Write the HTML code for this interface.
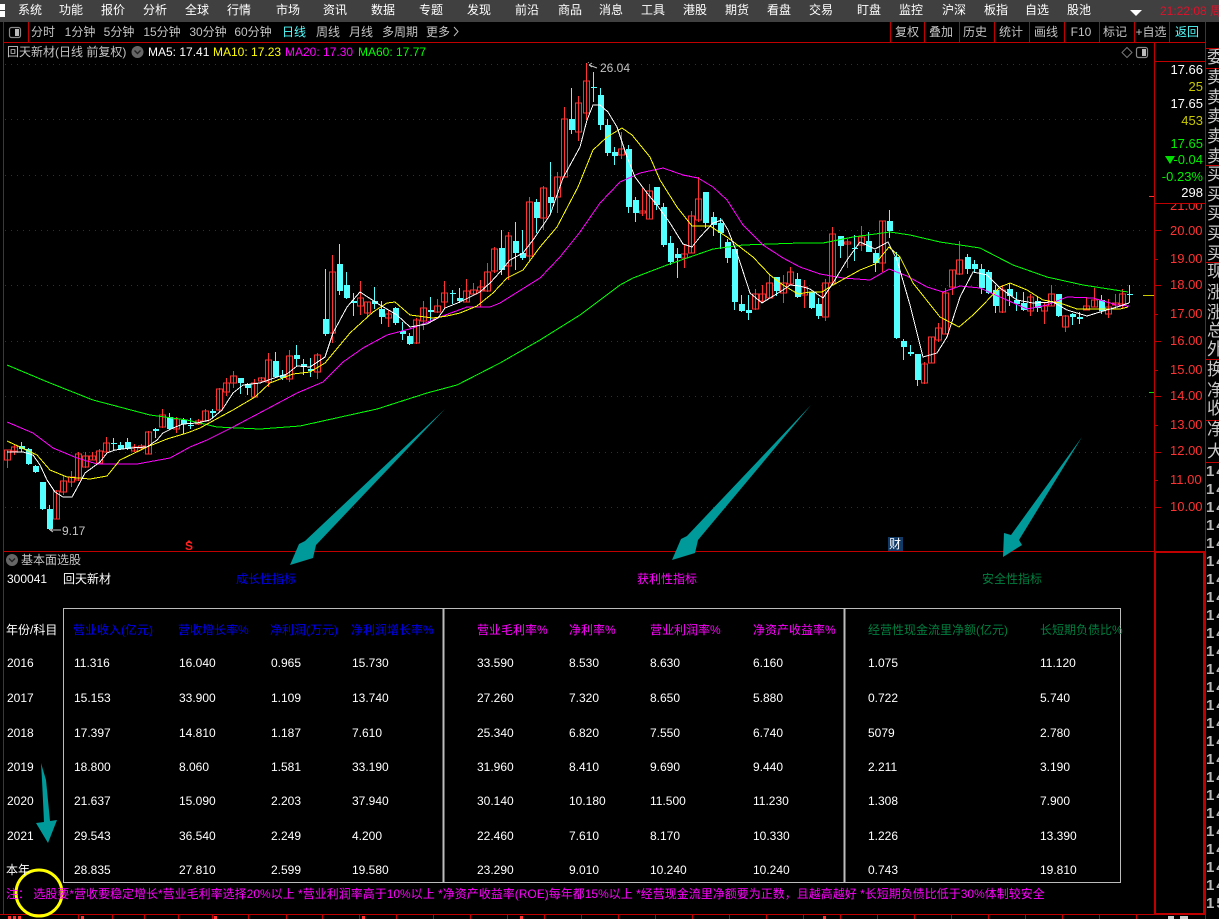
<!DOCTYPE html>
<html lang="zh">
<head>
<meta charset="utf-8">
<title>回天新材</title>
<style>
html,body{margin:0;padding:0;background:#000}
#r{position:relative;width:1219px;height:919px;overflow:hidden;background:#000;font:12px/16px "Liberation Sans","WenQuanYi Zen Hei","Noto Sans CJK SC",sans-serif;color:#ccc}
#r svg{position:absolute;left:0;top:0}
.t{position:absolute;white-space:nowrap;height:16px;line-height:16px}
.c{transform:translateX(-50%)}
.e{transform:translateX(-100%)}
.bar{position:absolute;left:0;top:0;width:1219px;height:22px;background:#404040}
.w{color:#fff}.g{color:#c4c4c4}.b{color:#0000ee}.m{color:#f0f}.s{color:#007f40}.ax{color:#ff3232;font-size:13px}
.rc{font-size:17px;color:#c8c8c8;left:1207px}
.n{font:bold 15px/16px "Liberation Sans",sans-serif;color:#bbb;left:1206px;letter-spacing:2px}
</style>
</head>
<body>
<div id="r">
<div class="bar"></div>

<svg width="1219" height="919" viewBox="0 0 1219 919">
<!-- hamburger -->
<path d="M0 4h5v6H0zM0 11h5v6H0z" fill="#fff"/>
<path d="M1130 10h12l-6 6z" fill="#fff"/>
<!-- frame lines -->
<g fill="#c00000" shape-rendering="crispEdges">
<rect x="3" y="22" width="1" height="892"/>
<rect x="3" y="42" width="1202" height="1"/>
<rect x="3" y="551" width="1151" height="1"/>
<rect x="0" y="914" width="1154" height="1"/>
<rect x="1154" y="42" width="1" height="510"/>
<rect x="1205" y="22" width="1" height="897"/>
<rect x="1154" y="61" width="51" height="1"/>
<rect x="1154" y="203" width="51" height="1"/>
<rect x="28" y="22" width="1" height="20"/>
<rect x="890" y="22" width="1" height="20"/><rect x="924" y="22" width="1" height="20"/><rect x="959" y="22" width="1" height="20"/><rect x="994" y="22" width="1" height="20"/><rect x="1029" y="22" width="1" height="20"/><rect x="1064" y="22" width="1" height="20"/><rect x="1099" y="22" width="1" height="20"/><rect x="1134" y="22" width="1" height="20"/><rect x="1169" y="22" width="1" height="20"/>
<rect x="1205" y="48" width="14" height="1"/><rect x="1205" y="68" width="14" height="1"/><rect x="1205" y="165" width="14" height="1"/><rect x="1205" y="262" width="14" height="1"/><rect x="1205" y="359" width="14" height="1"/><rect x="1205" y="420" width="14" height="1"/><rect x="1205" y="462" width="14" height="1"/>
<!-- lower right box -->
<rect x="1154" y="551" width="51" height="2"/>
<rect x="1154" y="913" width="51" height="2"/>
<rect x="1154" y="551" width="2" height="364"/>
<rect x="1203" y="551" width="3" height="364"/>
<!-- bottom ticks -->
<path d="M78 914h1v5h-1zM112 914h1v5h-1zM144 914h1v5h-1zM178 914h1v5h-1zM212 914h1v5h-1zM248 914h1v5h-1zM286 914h1v5h-1zM322 914h1v5h-1zM359 914h1v5h-1zM396 914h1v5h-1zM433 914h1v5h-1zM470 914h1v5h-1zM507 914h1v5h-1zM544 914h1v5h-1zM581 914h1v5h-1zM618 914h1v5h-1zM655 914h1v5h-1zM692 914h1v5h-1zM729 914h1v5h-1zM766 914h1v5h-1zM803 914h1v5h-1zM840 914h1v5h-1zM877 914h1v5h-1zM914 914h1v5h-1zM951 914h1v5h-1zM988 914h1v5h-1zM1025 914h1v5h-1zM1062 914h1v5h-1zM1099 914h1v5h-1zM1136 914h1v5h-1z"/>
</g>
<path d="M8 916h3v3H8zM13 916h3v3h-3zM18 916h3v3h-3zM81 916h3v3h-3zM214 916h3v3h-3zM362 916h3v3h-3zM520 916h3v3h-3zM823 916h3v3h-3z" fill="#ff3232"/>
<path d="M1168 916h6v3h-6zM1180 916h8v3h-8z" fill="#ccc"/>

<!-- grid -->
<g stroke="#a00000" stroke-width="1" stroke-dasharray="1 5" shape-rendering="crispEdges">
<path d="M5 64.5H1150M5 119.5H1150M5 175.5H1150M5 230.5H1150M5 285.5H1150M5 341.5H1150M5 396.5H1150M5 452.5H1150M5 507.5H1150"/>
</g>
<!-- axis ticks -->
<path d="M1155 230.5h6M1155 259.5h3M1155 285.5h6M1155 314.5h3M1155 341.5h6M1155 370.5h3M1155 396.5h6M1155 425.5h3M1155 452.5h6M1155 480.5h3M1155 507.5h6" stroke="#c00000" fill="none" shape-rendering="crispEdges"/>
<path d="M1149 196h5v1h-5z" fill="#ff3232"/>
<path d="M1143 295h11v1h-11z" fill="#c8c800"/>
<path d="M1149 392h5v1h-5z" fill="#00e000"/>

<!-- cyan wicks -->
<path fill="none" stroke="#54ffff" shape-rendering="crispEdges" d="M21.5 442V452M28.5 448V465M35.5 465V473M42.5 482V510M49.5 505V530M113.5 438V451M120.5 442V450M127.5 438V450M155.5 428V438M169.5 413V430M183.5 418V434M190.5 418V429M212.5 409V418M240.5 378V394M247.5 383V395M275.5 352V378M282.5 370V380M296.5 345V367M303.5 359V375M310.5 358V377M325.5 269V336M339.5 244V295M346.5 272V299M353.5 293V316M374.5 287V309M381.5 301V324M395.5 307V325M402.5 322V340M409.5 333V345M430.5 297V322M452.5 290V304M459.5 288V303M501.5 230V275M515.5 222V270M522.5 230V260M536.5 199V233M550.5 162V213M571.5 88V134M593.5 72V102M600.5 88V130M607.5 119V156M614.5 147V165M628.5 145V213M635.5 197V222M656.5 187V210M663.5 203V247M670.5 236V265M677.5 248V278M705.5 192V228M713.5 212V236M720.5 218V249M727.5 239V263M734.5 249V310M741.5 295V312M748.5 295V320M776.5 277V296M797.5 273V298M811.5 292V309M818.5 298V319M840.5 236V258M854.5 235V261M868.5 232V252M875.5 250V272M889.5 210V238M896.5 252V339M903.5 339V360M910.5 345V356M917.5 354V386M967.5 254V274M974.5 260V273M981.5 264V294M988.5 270V294M995.5 285V313M1009.5 283V306M1016.5 292V311M1023.5 292V311M1037.5 297V312M1058.5 294V317M1072.5 313V325M1079.5 312V324M1101.5 295V314M1129.5 285V303"/>
<!-- cyan bodies -->
<path fill="#54ffff" shape-rendering="crispEdges" d="M19 446h6v3h-6zM26 449h6v15h-6zM33 466h6v6h-6zM40 482h6v27h-6zM47 509h6v20h-6zM111 443h6v1h-6zM118 445h6v4h-6zM125 442h6v7h-6zM153 429h6v2h-6zM167 417h6v12h-6zM181 420h6v4h-6zM188 425h6v1h-6zM210 411h6v2h-6zM238 378h6v5h-6zM245 384h6v4h-6zM273 361h6v16h-6zM280 375h6v3h-6zM294 355h6v4h-6zM301 364h6v2h-6zM308 369h6v2h-6zM323 319h6v15h-6zM337 264h6v27h-6zM344 285h6v13h-6zM351 301h6v2h-6zM372 301h6v3h-6zM379 309h6v8h-6zM393 308h6v15h-6zM400 331h6v3h-6zM407 336h6v8h-6zM428 310h6v2h-6zM450 293h6v1h-6zM457 298h6v3h-6zM499 248h6v22h-6zM513 241h6v12h-6zM520 253h6v5h-6zM534 202h6v16h-6zM548 197h6v6h-6zM569 119h6v11h-6zM591 87h6v1h-6zM598 95h6v30h-6zM605 125h6v28h-6zM612 152h6v4h-6zM626 149h6v58h-6zM633 200h6v13h-6zM654 187h6v18h-6zM661 207h6v38h-6zM668 243h6v19h-6zM675 254h6v4h-6zM703 192h6v31h-6zM711 217h6v8h-6zM718 223h6v10h-6zM725 242h6v16h-6zM732 249h6v53h-6zM739 304h6v7h-6zM746 310h6v3h-6zM774 277h6v14h-6zM795 279h6v18h-6zM809 292h6v16h-6zM816 304h6v12h-6zM838 236h6v10h-6zM852 248h6v1h-6zM866 241h6v11h-6zM873 253h6v10h-6zM887 221h6v10h-6zM894 257h6v81h-6zM901 341h6v6h-6zM908 352h6v2h-6zM915 354h6v26h-6zM965 257h6v12h-6zM972 264h6v5h-6zM979 269h6v19h-6zM986 272h6v21h-6zM993 290h6v16h-6zM1007 289h6v7h-6zM1014 300h6v4h-6zM1021 303h6v7h-6zM1035 301h6v7h-6zM1056 294h6v22h-6zM1070 314h6v3h-6zM1077 317h6v2h-6zM1099 300h6v11h-6zM1127 294h6v1h-6z"/>
<!-- red candles -->
<path fill="#000" stroke="#ff3232" shape-rendering="crispEdges" d="M7.5 450V468M4.5 450h6v10h-6zM14.5 445V455M11.5 447h6v4h-6zM56.5 490V519M53.5 491h6v28h-6zM63.5 476V495M60.5 481h6v11h-6zM71.5 471V487M68.5 477h6v5h-6zM78.5 452V481M75.5 454h6v26h-6zM85.5 452V468M82.5 456h6v11h-6zM92.5 452V460M89.5 456h6v4h-6zM99.5 449V463M96.5 451h6v12h-6zM106.5 437V452M103.5 443h6v9h-6zM134.5 444V452M131.5 447h6v4h-6zM141.5 444V449M138.5 446h6v2h-6zM148.5 431V454M145.5 432h6v22h-6zM162.5 409V428M159.5 415h6v12h-6zM176.5 417V433M173.5 419h6v10h-6zM198.5 419V425M195.5 421h6v3h-6zM205.5 409V422M202.5 411h6v10h-6zM219.5 388V412M216.5 389h6v21h-6zM226.5 378V396M223.5 383h6v9h-6zM233.5 371V388M230.5 376h6v7h-6zM254.5 379V397M251.5 383h6v14h-6zM261.5 377V383M258.5 378h6v3h-6zM268.5 353V387M265.5 360h6v22h-6zM289.5 350V382M286.5 356h6v23h-6zM317.5 353V379M314.5 355h6v17h-6zM332.5 255V343M329.5 272h6v61h-6zM360.5 281V315M357.5 298h6v8h-6zM367.5 302V317M364.5 302h6v11h-6zM388.5 310V327M385.5 314h6v4h-6zM416.5 318V344M413.5 320h6v23h-6zM423.5 301V330M420.5 308h6v13h-6zM437.5 299V313M434.5 306h6v6h-6zM444.5 281V308M441.5 293h6v9h-6zM466.5 279V302M463.5 291h6v11h-6zM473.5 283V295M470.5 290h6v4h-6zM480.5 280V307M477.5 287h6v4h-6zM487.5 263V292M484.5 272h6v19h-6zM494.5 247V273M491.5 249h6v22h-6zM508.5 232V280M505.5 236h6v30h-6zM529.5 197V262M526.5 202h6v54h-6zM543.5 186V230M540.5 188h6v30h-6zM557.5 172V213M554.5 177h6v20h-6zM564.5 107V177M561.5 119h6v58h-6zM578.5 96V141M575.5 103h6v29h-6zM586.5 63V120M583.5 81h6v32h-6zM621.5 132V159M618.5 149h6v6h-6zM642.5 188V216M639.5 211h6v2h-6zM649.5 184V219M646.5 191h6v28h-6zM684.5 245V268M681.5 254h6v4h-6zM691.5 211V253M688.5 216h6v37h-6zM698.5 177V222M695.5 199h6v21h-6zM755.5 289V310M752.5 294h6v15h-6zM762.5 285V302M759.5 294h6v7h-6zM769.5 275V298M766.5 283h6v15h-6zM783.5 275V303M780.5 283h6v10h-6zM790.5 267V284M787.5 272h6v12h-6zM804.5 280V308M801.5 287h6v8h-6zM825.5 279V321M822.5 283h6v34h-6zM832.5 227V284M829.5 234h6v49h-6zM847.5 239V268M844.5 242h6v2h-6zM861.5 226V251M858.5 237h6v8h-6zM882.5 221V272M879.5 221h6v42h-6zM924.5 362V384M921.5 364h6v19h-6zM931.5 337V363M928.5 337h6v26h-6zM938.5 323V342M935.5 328h6v12h-6zM945.5 288V334M942.5 293h6v41h-6zM952.5 270V295M949.5 270h6v17h-6zM959.5 241V275M956.5 260h6v14h-6zM1002.5 285V313M999.5 290h6v22h-6zM1030.5 294V316M1027.5 297h6v14h-6zM1044.5 303V324M1041.5 306h6v5h-6zM1051.5 285V306M1048.5 294h6v12h-6zM1065.5 315V332M1062.5 316h6v11h-6zM1086.5 297V310M1083.5 306h6v4h-6zM1094.5 288V307M1091.5 300h6v7h-6zM1108.5 299V318M1105.5 307h6v7h-6zM1115.5 294V309M1112.5 303h6v2h-6zM1122.5 289V309M1119.5 294h6v10h-6z"/>

<!-- moving averages -->
<g fill="none" stroke-width="1" stroke-linejoin="round" shape-rendering="crispEdges">
<polyline stroke="#00ff00" points="7,365 50,383 93,400 150,415 187,420 217,427 260,429 300,426 377,409 427,393 457,385 500,363 540,340 580,315 620,285 633,278 667,265 713,249 743,245 800,243 823,243 853,237 890,232 910,235 940,242 980,248 1013,265 1047,277 1083,285 1128,292"/>
<polyline stroke="#ff00ff" points="7,422 33,433 53,448 77,458 97,464 137,464 170,458 190,447 207,440 233,427 267,409 297,393 323,382 343,362 363,348 387,335 413,328 440,317 467,307 490,307 500,303 540,278 560,257 580,232 600,203 620,182 640,173 663,168 683,175 698,178 713,187 727,200 743,225 763,245 783,258 800,267 820,274 843,278 870,280 889,269 907,276 927,287 943,292 960,286 980,288 1000,297 1027,309 1047,305 1067,297 1093,298 1117,305 1129,306"/>
<polyline stroke="#ffff00" points="7,441 20,447 37,455 50,470 67,477 90,479 107,476 120,460 147,447 167,439 187,433 200,428 220,417 233,410 255,397 270,383 293,374 310,372 325,363 350,333 373,312 387,303 395,302 410,315 433,318 447,316 460,313 477,306 493,293 507,278 523,270 540,247 557,227 578,187 593,150 607,137 622,128 632,135 650,157 660,180 677,207 692,226 710,226 727,237 740,247 753,257 770,275 783,285 798,294 810,292 822,292 833,285 860,270 875,264 889,247 900,257 913,283 940,317 959,327 973,315 983,305 1000,287 1010,283 1027,290 1043,300 1060,303 1077,309 1120,309 1128,307"/>
<polyline stroke="#ffffff" points="7,452 13,452 23,452 33,455 40,465 47,480 55,492 63,497 72,497 77,488 85,473 100,462 107,453 115,450 130,448 147,447 157,440 163,433 173,428 183,424 197,423 210,420 222,410 233,393 243,385 260,383 277,377 287,374 297,366 310,367 325,357 333,333 347,307 360,292 380,305 397,315 410,327 427,324 438,318 445,308 460,302 480,292 490,283 500,272 510,260 523,253 533,240 550,215 563,178 580,147 587,120 593,105 600,105 608,112 617,127 627,157 635,177 647,193 657,205 670,223 683,244 692,247 700,237 713,223 722,220 728,230 737,253 750,293 762,303 770,298 783,290 790,285 800,286 810,289 823,298 833,283 847,260 860,242 875,249 888,242 897,260 910,305 923,357 937,353 947,337 960,297 973,272 987,275 1000,288 1017,300 1033,303 1053,302 1067,310 1087,316 1100,312 1117,307 1129,303"/>
</g>

<!-- high/low arrows -->
<path d="M597 68L589 65M589 65l3-2M589 65l3 2" stroke="#c4c4c4" fill="none"/>
<path d="M61 530H50M50 530l3-2M50 530l3 2" stroke="#c4c4c4" fill="none"/>
<path d="M586 64l3-2v1h-2z" fill="#c4c4c4"/>

<!-- teal arrows -->
<g fill="#009a9a">
<polygon points="445,409 316,545 313,558 290,565 299,544 305,541"/>
<polygon points="811,405 698,540 695,553 672,560 681,539 687,536"/>
<polygon points="1082,437 1019,540 1022,545 1003,557 1004,533 1011,535"/>
<polygon points="41,763 42,780 44,822 36,823 48,843 57,820 50,821 46,780"/>
</g>

<!-- toolbar icon -->
<rect x="9.5" y="27.5" width="11" height="10" rx="2" fill="none" stroke="#888" stroke-width="1.2"/>
<rect x="15" y="29" width="4" height="7" fill="#bbb"/>
<rect x="1136.5" y="47.5" width="11" height="10" rx="2" fill="none" stroke="#888" stroke-width="1.2"/>
<rect x="1142" y="49" width="4" height="7" fill="#bbb"/>
<path d="M1127 47.5l5 5-5 5-5-5z" fill="none" stroke="#777"/>
<path d="M454 27l4 4.5-4 4.5" fill="none" stroke="#bbb"/>
<!-- drop circles -->
<circle cx="137.500" cy="52" r="6" fill="#666"/>
<path d="M134.500 50.500l3 3 3-3" fill="none" stroke="#222" stroke-width="1.400"/>
<circle cx="12" cy="560" r="6" fill="#666"/>
<path d="M9 558.500l3 3 3-3" fill="none" stroke="#222" stroke-width="1.400"/>
<!-- red triangle marker -->
<path d="M186 543l3-3 3 3z" fill="#ff2020"/>
<!-- 财 box -->
<rect x="888" y="537" width="15" height="14" fill="#123a66"/>
<!-- down triangle -->
<path d="M1165 156h10l-5 8z" fill="#00e000"/>

<!-- table box -->
<g fill="none" stroke="#bcbcbc" shape-rendering="crispEdges">
<rect x="63.500" y="608.500" width="1057" height="274"/>
</g>
<path d="M442.500 608h2v275h-2zM843.500 608h2v275h-2z" fill="#bcbcbc"/>

<!-- yellow circle -->
<circle cx="39" cy="893" r="23" fill="none" stroke="#ffff00" stroke-width="3"/>
</svg>

<!-- menu -->
<span class="t c w" style="left:30px;top:2px">系统</span><span class="t c w" style="left:71px;top:2px">功能</span><span class="t c w" style="left:113px;top:2px">报价</span><span class="t c w" style="left:155px;top:2px">分析</span><span class="t c w" style="left:197px;top:2px">全球</span><span class="t c w" style="left:239px;top:2px">行情</span><span class="t c w" style="left:288px;top:2px">市场</span><span class="t c w" style="left:335px;top:2px">资讯</span><span class="t c w" style="left:383px;top:2px">数据</span><span class="t c w" style="left:431px;top:2px">专题</span><span class="t c w" style="left:479px;top:2px">发现</span><span class="t c w" style="left:527px;top:2px">前沿</span><span class="t c w" style="left:570px;top:2px">商品</span><span class="t c w" style="left:611px;top:2px">消息</span><span class="t c w" style="left:653px;top:2px">工具</span><span class="t c w" style="left:695px;top:2px">港股</span><span class="t c w" style="left:737px;top:2px">期货</span><span class="t c w" style="left:779px;top:2px">看盘</span><span class="t c w" style="left:821px;top:2px">交易</span><span class="t c w" style="left:869px;top:2px">盯盘</span><span class="t c w" style="left:911px;top:2px">监控</span><span class="t c w" style="left:954px;top:2px">沪深</span><span class="t c w" style="left:996px;top:2px">板指</span><span class="t c w" style="left:1037px;top:2px">自选</span><span class="t c w" style="left:1079px;top:2px">股池</span>
<span class="t" style="left:1160px;top:3px;color:#e0102a">21:22:08</span><span class="t" style="left:1210px;top:3px;color:#e0102a">周</span>

<!-- toolbar -->
<span class="t c g" style="left:43px;top:24px">分时</span><span class="t c g" style="left:80px;top:24px">1分钟</span><span class="t c g" style="left:119px;top:24px">5分钟</span><span class="t c g" style="left:162px;top:24px">15分钟</span><span class="t c g" style="left:208px;top:24px">30分钟</span><span class="t c g" style="left:253px;top:24px">60分钟</span><span class="t c" style="left:294px;top:24px;color:#54ffff">日线</span><span class="t c g" style="left:328px;top:24px">周线</span><span class="t c g" style="left:361px;top:24px">月线</span><span class="t c g" style="left:400px;top:24px">多周期</span><span class="t c g" style="left:438px;top:24px">更多</span>
<span class="t c g" style="left:907px;top:24px">复权</span><span class="t c g" style="left:941px;top:24px">叠加</span><span class="t c g" style="left:975px;top:24px">历史</span><span class="t c g" style="left:1011px;top:24px">统计</span><span class="t c g" style="left:1046px;top:24px">画线</span><span class="t c g" style="left:1081px;top:24px">F10</span><span class="t c g" style="left:1115px;top:24px">标记</span><span class="t c g" style="left:1151px;top:24px">+自选</span><span class="t c" style="left:1187px;top:24px;color:#54ffff">返回</span>

<!-- title -->
<span class="t g" style="left:7px;top:44px">回天新材(日线 前复权)</span>
<span class="t w" style="left:148px;top:44px">MA5: 17.41</span>
<span class="t" style="left:213px;top:44px;color:#ff0">MA10: 17.23</span>
<span class="t m" style="left:285px;top:44px">MA20: 17.30</span>
<span class="t" style="left:358px;top:44px;color:#0f0">MA60: 17.77</span>
<span class="t" style="left:600px;top:60px;color:#c4c4c4">26.04</span>
<span class="t" style="left:62px;top:523px;color:#c4c4c4">9.17</span>
<span class="t c" style="left:189px;top:538px;color:#ff2020;font-weight:bold">S</span>
<span class="t c w" style="left:895px;top:536px">财</span>

<!-- quote panel -->
<span class="t e w" style="left:1203px;top:62px;font-size:13px">17.66</span>
<span class="t e" style="left:1203px;top:79px;font-size:13px;color:#c8c800">25</span>
<span class="t e w" style="left:1203px;top:96px;font-size:13px">17.65</span>
<span class="t e" style="left:1203px;top:113px;font-size:13px;color:#c8c800">453</span>
<span class="t e" style="left:1203px;top:136px;font-size:13px;color:#0e0">17.65</span>
<span class="t e" style="left:1203px;top:152px;font-size:13px;color:#0e0">-0.04</span>
<span class="t e" style="left:1203px;top:169px;font-size:13px;color:#0e0">-0.23%</span>
<span class="t e w" style="left:1203px;top:185px;font-size:13px">298</span>

<!-- axis -->
<div style="position:absolute;left:1170px;top:204px;width:33px;height:9px;overflow:hidden"><span class="t ax" style="left:0;top:-6px">21.00</span></div>
<span class="t ax" style="left:1170px;top:223px">20.00</span><span class="t ax" style="left:1170px;top:251px">19.00</span><span class="t ax" style="left:1170px;top:277px">18.00</span><span class="t ax" style="left:1170px;top:306px">17.00</span><span class="t ax" style="left:1170px;top:333px">16.00</span><span class="t ax" style="left:1170px;top:362px">15.00</span><span class="t ax" style="left:1170px;top:388px">14.00</span><span class="t ax" style="left:1170px;top:417px">13.00</span><span class="t ax" style="left:1170px;top:443px">12.00</span><span class="t ax" style="left:1170px;top:472px">11.00</span><span class="t ax" style="left:1170px;top:499px">10.00</span>

<!-- right column -->
<span class="t rc" style="top:50px">委</span><span class="t rc" style="top:70px">卖</span><span class="t rc" style="top:90px">卖</span><span class="t rc" style="top:109px">卖</span><span class="t rc" style="top:129px">卖</span><span class="t rc" style="top:149px">卖</span><span class="t rc" style="top:167px">买</span><span class="t rc" style="top:187px">买</span><span class="t rc" style="top:206px">买</span><span class="t rc" style="top:226px">买</span><span class="t rc" style="top:246px">买</span><span class="t rc" style="top:264px">现</span><span class="t rc" style="top:285px">涨</span><span class="t rc" style="top:305px">涨</span><span class="t rc" style="top:323px">总</span><span class="t rc" style="top:342px">外</span><span class="t rc" style="top:362px">换</span><span class="t rc" style="top:383px">净</span><span class="t rc" style="top:401px">收</span><span class="t rc" style="top:422px">净</span><span class="t rc" style="top:444px">大</span>
<span class="t n" style="top:464px">14</span><span class="t n" style="top:482px">14</span><span class="t n" style="top:500px">14</span><span class="t n" style="top:518px">14</span><span class="t n" style="top:536px">14</span><span class="t n" style="top:554px">14</span><span class="t n" style="top:572px">14</span><span class="t n" style="top:590px">14</span><span class="t n" style="top:608px">14</span><span class="t n" style="top:626px">14</span><span class="t n" style="top:644px">14</span><span class="t n" style="top:662px">14</span><span class="t n" style="top:680px">14</span><span class="t n" style="top:698px">14</span><span class="t n" style="top:716px">14</span><span class="t n" style="top:734px">14</span><span class="t n" style="top:752px">14</span><span class="t n" style="top:770px">14</span><span class="t n" style="top:788px">14</span><span class="t n" style="top:806px">14</span><span class="t n" style="top:824px">14</span><span class="t n" style="top:842px">14</span><span class="t n" style="top:860px">14</span><span class="t n" style="top:878px">14</span><span class="t n" style="top:896px">15</span>

<!-- panel -->
<span class="t g" style="left:21px;top:552px">基本面选股</span>
<span class="t w" style="left:7px;top:571px">300041</span>
<span class="t w" style="left:63px;top:571px">回天新材</span>
<span class="t c b" style="left:266px;top:571px">成长性指标</span>
<span class="t c m" style="left:667px;top:571px">获利性指标</span>
<span class="t c s" style="left:1012px;top:571px">安全性指标</span>

<span class="t w" style="left:6px;top:622px">年份/科目</span>
<span class="t b" style="left:73px;top:622px">营业收入(亿元)</span><span class="t b" style="left:178px;top:622px">营收增长率%</span><span class="t b" style="left:270px;top:622px">净利润(万元)</span><span class="t b" style="left:351px;top:622px">净利润增长率%</span>
<span class="t m" style="left:477px;top:622px">营业毛利率%</span><span class="t m" style="left:569px;top:622px">净利率%</span><span class="t m" style="left:650px;top:622px">营业利润率%</span><span class="t m" style="left:753px;top:622px">净资产收益率%</span>
<span class="t s" style="left:868px;top:622px">经营性现金流里净额(亿元)</span><span class="t s" style="left:1040px;top:622px">长短期负债比%</span>

<span class="t w" style="left:7px;top:655px">2016</span><span class="t w" style="left:74px;top:655px">11.316</span><span class="t w" style="left:179px;top:655px">16.040</span><span class="t w" style="left:271px;top:655px">0.965</span><span class="t w" style="left:352px;top:655px">15.730</span><span class="t w" style="left:477px;top:655px">33.590</span><span class="t w" style="left:569px;top:655px">8.530</span><span class="t w" style="left:650px;top:655px">8.630</span><span class="t w" style="left:753px;top:655px">6.160</span><span class="t w" style="left:868px;top:655px">1.075</span><span class="t w" style="left:1040px;top:655px">11.120</span>
<span class="t w" style="left:7px;top:690px">2017</span><span class="t w" style="left:74px;top:690px">15.153</span><span class="t w" style="left:179px;top:690px">33.900</span><span class="t w" style="left:271px;top:690px">1.109</span><span class="t w" style="left:352px;top:690px">13.740</span><span class="t w" style="left:477px;top:690px">27.260</span><span class="t w" style="left:569px;top:690px">7.320</span><span class="t w" style="left:650px;top:690px">8.650</span><span class="t w" style="left:753px;top:690px">5.880</span><span class="t w" style="left:868px;top:690px">0.722</span><span class="t w" style="left:1040px;top:690px">5.740</span>
<span class="t w" style="left:7px;top:725px">2018</span><span class="t w" style="left:74px;top:725px">17.397</span><span class="t w" style="left:179px;top:725px">14.810</span><span class="t w" style="left:271px;top:725px">1.187</span><span class="t w" style="left:352px;top:725px">7.610</span><span class="t w" style="left:477px;top:725px">25.340</span><span class="t w" style="left:569px;top:725px">6.820</span><span class="t w" style="left:650px;top:725px">7.550</span><span class="t w" style="left:753px;top:725px">6.740</span><span class="t w" style="left:868px;top:725px">5079</span><span class="t w" style="left:1040px;top:725px">2.780</span>
<span class="t w" style="left:7px;top:759px">2019</span><span class="t w" style="left:74px;top:759px">18.800</span><span class="t w" style="left:179px;top:759px">8.060</span><span class="t w" style="left:271px;top:759px">1.581</span><span class="t w" style="left:352px;top:759px">33.190</span><span class="t w" style="left:477px;top:759px">31.960</span><span class="t w" style="left:569px;top:759px">8.410</span><span class="t w" style="left:650px;top:759px">9.690</span><span class="t w" style="left:753px;top:759px">9.440</span><span class="t w" style="left:868px;top:759px">2.211</span><span class="t w" style="left:1040px;top:759px">3.190</span>
<span class="t w" style="left:7px;top:793px">2020</span><span class="t w" style="left:74px;top:793px">21.637</span><span class="t w" style="left:179px;top:793px">15.090</span><span class="t w" style="left:271px;top:793px">2.203</span><span class="t w" style="left:352px;top:793px">37.940</span><span class="t w" style="left:477px;top:793px">30.140</span><span class="t w" style="left:569px;top:793px">10.180</span><span class="t w" style="left:650px;top:793px">11.500</span><span class="t w" style="left:753px;top:793px">11.230</span><span class="t w" style="left:868px;top:793px">1.308</span><span class="t w" style="left:1040px;top:793px">7.900</span>
<span class="t w" style="left:7px;top:828px">2021</span><span class="t w" style="left:74px;top:828px">29.543</span><span class="t w" style="left:179px;top:828px">36.540</span><span class="t w" style="left:271px;top:828px">2.249</span><span class="t w" style="left:352px;top:828px">4.200</span><span class="t w" style="left:477px;top:828px">22.460</span><span class="t w" style="left:569px;top:828px">7.610</span><span class="t w" style="left:650px;top:828px">8.170</span><span class="t w" style="left:753px;top:828px">10.330</span><span class="t w" style="left:868px;top:828px">1.226</span><span class="t w" style="left:1040px;top:828px">13.390</span>
<span class="t w" style="left:6px;top:862px">本年</span><span class="t w" style="left:74px;top:862px">28.835</span><span class="t w" style="left:179px;top:862px">27.810</span><span class="t w" style="left:271px;top:862px">2.599</span><span class="t w" style="left:352px;top:862px">19.580</span><span class="t w" style="left:477px;top:862px">23.290</span><span class="t w" style="left:569px;top:862px">9.010</span><span class="t w" style="left:650px;top:862px">10.240</span><span class="t w" style="left:753px;top:862px">10.240</span><span class="t w" style="left:868px;top:862px">0.743</span><span class="t w" style="left:1040px;top:862px">19.810</span>

<span class="t m" style="left:6px;top:886px">注： 选股要*营收要稳定增长*营业毛利率选择20%以上 *营业利润率高于10%以上 *净资产收益率(ROE)每年都15%以上 *经营现金流里净额要为正数，且越高越好 *长短期负债比低于30%体制较安全</span>
</div>
</body>
</html>
